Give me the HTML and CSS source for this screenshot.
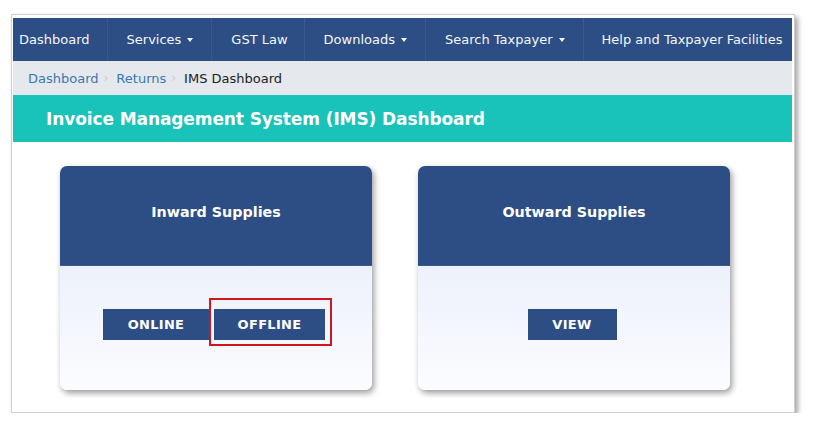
FILE: index.html
```html
<!DOCTYPE html>
<html lang="en">
<head>
    <meta charset="UTF-8">
    <meta name="viewport" content="width=device-width, initial-scale=1.0">
    <title>IMS Dashboard</title>
    <link rel="stylesheet" href="styles.css">
</head>
<body>
    <div class="moldura">
        <nav class="menu">
            <a class="menu-item primeiro">Dashboard</a>
            <a class="menu-item">Services <span class="seta"></span></a>
            <a class="menu-item">GST Law</a>
            <a class="menu-item">Downloads <span class="seta"></span></a>
            <a class="menu-item">Search Taxpayer <span class="seta"></span></a>
            <a class="menu-item ultimo">Help and Taxpayer Facilities</a>
        </nav>

        <div class="trilha">
            <a>Dashboard</a><span class="sep">›</span>
            <a>Returns</a><span class="sep">›</span>
            <span class="atual">IMS Dashboard</span>
        </div>

        <h1 class="titulo">Invoice Management System (IMS) Dashboard</h1>

        <div class="cartoes">
            <div class="cartao">
                <div class="cartao-topo">Inward Supplies</div>
                <div class="cartao-corpo">
                    <button class="botao online">ONLINE</button>
                    <span class="destaque">
                        <button class="botao offline">OFFLINE</button>
                        <span class="marca"></span>
                    </span>
                </div>
            </div>

            <div class="cartao">
                <div class="cartao-topo">Outward Supplies</div>
                <div class="cartao-corpo">
                    <button class="botao ver">VIEW</button>
                </div>
            </div>
        </div>
    </div>
</body>
</html>
```

FILE: styles.css
```css
/* Estilo Geral */
body {
    font-family: "DejaVu Sans", Verdana, sans-serif;
    background-color: #fff;
    color: #333;
    margin: 0;
    padding: 0;
}

.moldura {
    width: 784px;
    height: 399px;
    margin: 14px 0 0 11px;
    padding: 3px 2px 0 1px;
    box-sizing: border-box;
    border: 1px solid #cfcfcf;
    background: #fff;
    box-shadow: 3px 3px 5px rgba(0, 0, 0, 0.35);
}

/* Menu superior */
.menu {
    display: flex;
    height: 43px;
    background: #2c4e85;
}

.menu-item {
    display: flex;
    align-items: center;
    padding: 0 16px 0 19px;
    color: #f4f6fa;
    font-size: 13px;
    border-left: 1px solid #365a92;
    white-space: nowrap;
}

.menu-item.primeiro {
    padding-left: 6px;
    padding-right: 17px;
    border-left: none;
}

.menu-item.ultimo {
    flex: 1;
    padding-left: 18px;
}

.seta {
    display: inline-block;
    margin-left: 6px;
    border-top: 4px solid #f4f6fa;
    border-left: 3px solid transparent;
    border-right: 3px solid transparent;
    margin-right: 2px;
    vertical-align: middle;
}

/* Breadcrumb */
.trilha {
    display: flex;
    align-items: center;
    height: 34px;
    padding-left: 15px;
    background: #e5e8ec;
    font-size: 13px;
}

.trilha a {
    color: #3a78b2;
}

.trilha .sep {
    color: #c8ccd2;
    margin: 0 8px 0 5px;
    font-size: 12px;
}

.trilha .atual {
    color: #222;
}

h1.titulo {
    margin: 0;
    height: 47px;
    display: flex;
    align-items: center;
    padding-left: 33px;
    background: #19c3ba;
    color: #fff;
    font-size: 17px;
    font-weight: bold;
    letter-spacing: -0.1px;
}

/* Cartoes */
.cartoes {
    display: flex;
    gap: 46px;
    padding: 24px 0 0 47px;
}

.cartao {
    width: 312px;
    height: 224px;
    border-radius: 7px;
    overflow: hidden;
    box-shadow: 2px 3px 6px rgba(0, 0, 0, 0.4);
    display: flex;
    flex-direction: column;
}

.cartao-topo {
    height: 100px;
    box-sizing: border-box;
    padding-top: 38px;
    background: #2c4e85;
    color: #fff;
    font-size: 14.3px;
    font-weight: bold;
    text-align: center;
    border-bottom: 1px solid #3d5a8a;
}

.cartao-corpo {
    flex: 1;
    display: flex;
    justify-content: center;
    align-items: flex-start;
    gap: 5px;
    padding: 43px 4px 0 0;
    background: linear-gradient(#edf1fb, #fbfcff);
}

.botao {
    height: 31px;
    border: none;
    background: #2c4e85;
    color: #fff;
    font-family: inherit;
    font-size: 13px;
    font-weight: bold;
    letter-spacing: 0.3px;
    cursor: pointer;
}

.botao.online {
    width: 106px;
}

.botao.offline {
    width: 111px;
}

.botao.ver {
    width: 89px;
}

.destaque {
    position: relative;
    display: inline-block;
}

.destaque .botao {
    display: block;
}

.marca {
    position: absolute;
    top: -11px;
    left: -5px;
    right: -7px;
    bottom: -6px;
    border: 2px solid #d3161d;
}
```
